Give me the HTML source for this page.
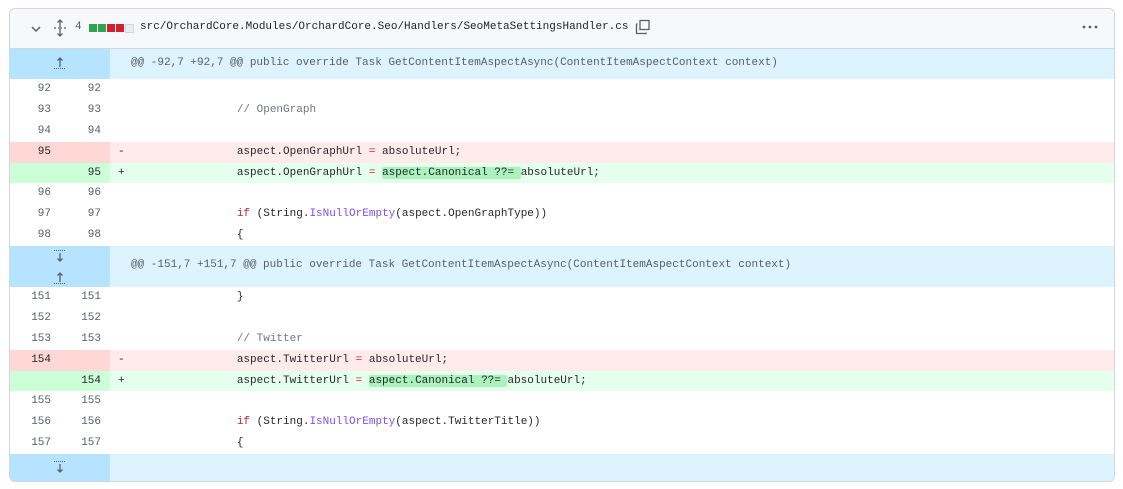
<!DOCTYPE html>
<html><head><style>
body{margin:0;background:#fff;font-family:"Liberation Mono",monospace;}
.card{position:absolute;left:9px;top:8px;width:1104px;height:472px;border:1px solid #d0d7de;border-radius:6px;overflow:hidden;background:#fff;}
.hdr{height:39px;background:#f6f8fa;border-bottom:1px solid #d0d7de;position:relative;font-size:11px;color:#1f2328;}
.row{position:relative;height:20.875px;font-size:11px;line-height:20.875px;white-space:pre;color:#24292f;}
.n1,.n2{position:absolute;top:0;height:100%;width:50px;text-align:right;color:#57606a;box-sizing:border-box;}
.n1{left:0;padding-right:9px}.n2{left:50px;padding-right:9px}
.code{position:absolute;left:108px;top:0}
.del{background:#ffebe9}.del .n1,.del .n2{background:#ffd7d5;color:#1f2328}
.add{background:#e6ffec}.add .n1,.add .n2{background:#ccffd8;color:#1f2328}
.hl{background:#abf2bc;border-radius:2px}
.hunk{position:relative;background:#ddf4ff;font-size:11px;color:#57606a;white-space:pre;}
.hunk .ex{position:absolute;left:0;top:0;width:100px;height:100%;background:#b6e3ff;}
.hunk .t{position:absolute;left:121px;}
.k{color:#cf222e}.f{color:#8250df}.c{color:#6e7781}
</style></head><body>
<div class="card">
<div class="hdr">
<svg style="position:absolute;left:20px;top:14px" width="12" height="12" viewBox="0 0 12 12"><path d="M2 4l4 4 4-4" fill="none" stroke="#57606a" stroke-width="1.5"/></svg>
<svg style="position:absolute;left:43px;top:10px" width="14" height="18" viewBox="0 0 14 18"><path d="M7 1v16M4.5 3.5L7 1l2.5 2.5M4.5 14.5L7 17l2.5-2.5" fill="none" stroke="#57606a" stroke-width="1.3"/><path d="M1 9h2M5 9h1M8 9h1M11 9h2" stroke="#57606a" stroke-width="1.2"/></svg>
<span style="position:absolute;left:65px;top:12px;color:#57606a">4</span>
<span style="position:absolute;left:79px;top:15px;width:8px;height:8px;background:#2da44e"></span>
<span style="position:absolute;left:88px;top:15px;width:8px;height:8px;background:#2da44e"></span>
<span style="position:absolute;left:97px;top:15px;width:8px;height:8px;background:#cf222e"></span>
<span style="position:absolute;left:106px;top:15px;width:8px;height:8px;background:#cf222e"></span>
<span style="position:absolute;left:115px;top:15px;width:7px;height:7px;border:0.5px solid #d0d7de;background:#eaeef2"></span>
<span style="position:absolute;left:130px;top:12px">src/OrchardCore.Modules/OrchardCore.Seo/Handlers/SeoMetaSettingsHandler.cs</span>
<svg style="position:absolute;left:625px;top:10px" width="16" height="16" viewBox="0 0 16 16"><path d="M5 1.5h9v9H5zM2.5 5H1.5v9.5H11v-1" fill="none" stroke="#57606a" stroke-width="1.3"/></svg>
<svg style="position:absolute;left:1072px;top:16px" width="16" height="4" viewBox="0 0 16 4"><circle cx="2" cy="2" r="1.4" fill="#57606a"/><circle cx="8" cy="2" r="1.4" fill="#57606a"/><circle cx="14" cy="2" r="1.4" fill="#57606a"/></svg>
</div>
<div class="hunk" style="height:30px"><div class="ex"><svg style="position:absolute;left:42px;top:7px" width="16" height="14" viewBox="0 0 16 14"><path d="M8 11V2M5.5 4.5L8 2l2.5 2.5" fill="none" stroke="#57606a" stroke-width="1.3"/><path d="M2 12.5h12" stroke="#57606a" stroke-dasharray="1 1"/></svg></div><span class="t" style="top:8px">@@ -92,7 +92,7 @@ public override Task GetContentItemAspectAsync(ContentItemAspectContext context)</span></div>
<div class="row"><span class="n1">92</span><span class="n2">92</span></div>
<div class="row"><span class="n1">93</span><span class="n2">93</span><span class="code">                  <span class="c">// OpenGraph</span></span></div>
<div class="row"><span class="n1">94</span><span class="n2">94</span></div>
<div class="row del"><span class="n1">95</span><span class="n2"></span><span class="code">-                 aspect.OpenGraphUrl <span class="k">=</span> absoluteUrl;</span></div>
<div class="row add"><span class="n1"></span><span class="n2">95</span><span class="code">+                 aspect.OpenGraphUrl <span class="k">=</span> <span class="hl">aspect.Canonical ??= </span>absoluteUrl;</span></div>
<div class="row"><span class="n1">96</span><span class="n2">96</span></div>
<div class="row"><span class="n1">97</span><span class="n2">97</span><span class="code">                  <span class="k">if</span> (String.<span class="f">IsNullOrEmpty</span>(aspect.OpenGraphType))</span></div>
<div class="row"><span class="n1">98</span><span class="n2">98</span><span class="code">                  {</span></div>
<div class="hunk" style="height:41px"><div class="ex"><svg style="position:absolute;left:42px;top:3px" width="16" height="36" viewBox="0 0 16 36"><path d="M2 1.5h12" stroke="#57606a" stroke-dasharray="1 1"/><path d="M8 4v8M5.5 9.5L8 12l2.5-2.5" fill="none" stroke="#57606a" stroke-width="1.3"/><path d="M8 33V24M5.5 26.5L8 24l2.5 2.5" fill="none" stroke="#57606a" stroke-width="1.3"/><path d="M2 34.5h12" stroke="#57606a" stroke-dasharray="1 1"/></svg></div><span class="t" style="top:13px">@@ -151,7 +151,7 @@ public override Task GetContentItemAspectAsync(ContentItemAspectContext context)</span></div>
<div class="row"><span class="n1">151</span><span class="n2">151</span><span class="code">                  }</span></div>
<div class="row"><span class="n1">152</span><span class="n2">152</span></div>
<div class="row"><span class="n1">153</span><span class="n2">153</span><span class="code">                  <span class="c">// Twitter</span></span></div>
<div class="row del"><span class="n1">154</span><span class="n2"></span><span class="code">-                 aspect.TwitterUrl <span class="k">=</span> absoluteUrl;</span></div>
<div class="row add"><span class="n1"></span><span class="n2">154</span><span class="code">+                 aspect.TwitterUrl <span class="k">=</span> <span class="hl">aspect.Canonical ??= </span>absoluteUrl;</span></div>
<div class="row"><span class="n1">155</span><span class="n2">155</span></div>
<div class="row"><span class="n1">156</span><span class="n2">156</span><span class="code">                  <span class="k">if</span> (String.<span class="f">IsNullOrEmpty</span>(aspect.TwitterTitle))</span></div>
<div class="row"><span class="n1">157</span><span class="n2">157</span><span class="code">                  {</span></div>
<div class="hunk" style="height:30px"><div class="ex"><svg style="position:absolute;left:42px;top:6px" width="16" height="14" viewBox="0 0 16 14"><path d="M2 1.5h12" stroke="#57606a" stroke-dasharray="1 1"/><path d="M8 4v8M5.5 9.5L8 12l2.5-2.5" fill="none" stroke="#57606a" stroke-width="1.3"/></svg></div></div>
</div>
</body></html>
